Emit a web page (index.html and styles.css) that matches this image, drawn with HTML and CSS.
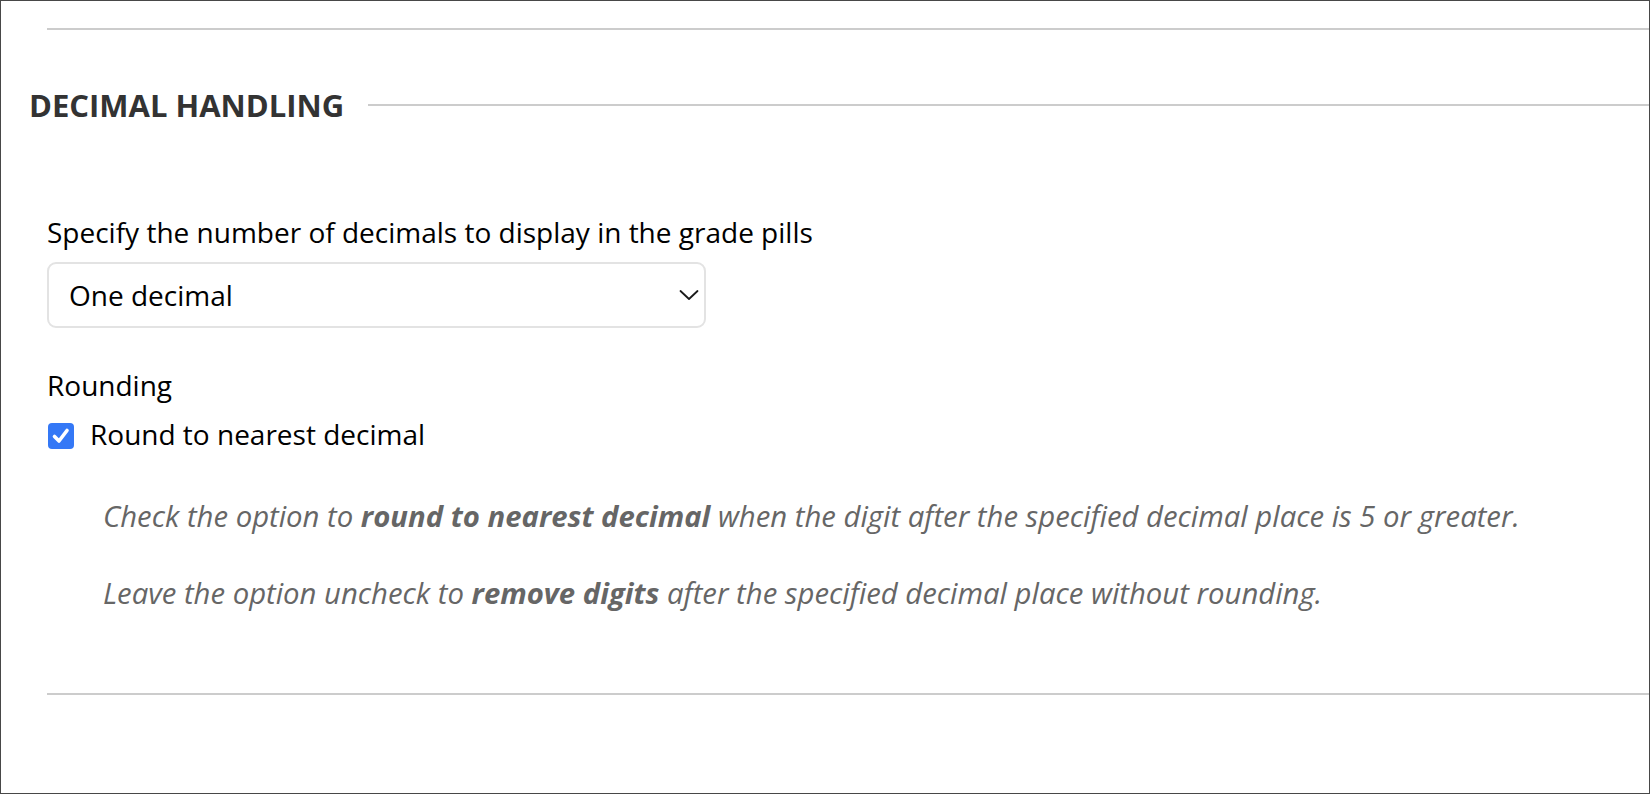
FILE: index.html
```html
<!DOCTYPE html>
<html lang="en">
<head>
<meta charset="utf-8">
<title>Decimal handling</title>
<link rel="stylesheet" href="styles.css">
</head>
<body>
<div class="frame">
  <div class="rule rule-top"></div>
  <div class="section-header">
    <h2 class="section-title">DECIMAL HANDLING</h2>
    <div class="section-line"></div>
  </div>
  <div class="fields">
    <label class="field-label" for="decimals">Specify the number of decimals to display in the grade pills</label>
    <div class="select" id="decimals">
      <span class="select-value">One decimal</span>
      <svg class="chevron" width="20" height="10" viewBox="0 0 20 10"><path d="M1.5 1 L10 9 L18.5 1" fill="none" stroke="#1a1a1a" stroke-width="1.8" stroke-linecap="round" stroke-linejoin="round"/></svg>
    </div>
    <div class="group-label">Rounding</div>
    <div class="check-row">
      <span class="checkbox">
        <svg width="26" height="26" viewBox="0 0 26 26"><path d="M6.5 13.5 L11 18 L19 7.5" fill="none" stroke="#fff" stroke-width="3.6" stroke-linecap="round" stroke-linejoin="round"/></svg>
      </span>
      <span class="check-text">Round to nearest decimal</span>
    </div>
    <div class="help">
      <p>Check the option to <b>round to nearest decimal</b> when the digit after the specified decimal place is 5 or greater.</p>
      <p>Leave the option uncheck to <b>remove digits</b> after the specified decimal place without rounding.</p>
    </div>
  </div>
  <div class="rule rule-bottom"></div>
</div>
</body>
</html>
```

FILE: styles.css
```css
html, body {
  margin: 0;
  padding: 0;
  background: #fff;
}
body {
  font-family: "Open Sans", "Liberation Sans", sans-serif;
  color: #000;
}
.frame {
  width: 1650px;
  height: 794px;
  box-sizing: border-box;
  border: 1px solid #484848;
  display: flex;
  flex-direction: column;
}
.rule {
  height: 2px;
  background: #cccccc;
  margin-left: 46px;
}
.rule-top {
  margin-top: 27px;
}
.section-header {
  display: flex;
  align-items: center;
  padding-left: 28px;
  margin-top: 53px;
}
.section-title {
  margin: 0;
  font-size: 31px;
  line-height: 44px;
  font-weight: 700;
  color: #333;
}
.section-line {
  flex: 1;
  height: 2px;
  background: #cccccc;
  margin-left: 24px;
}
.fields {
  padding-left: 46px;
  display: flex;
  flex-direction: column;
  align-items: flex-start;
}
.field-label {
  margin-top: 86px;
  font-size: 28px;
  line-height: 38px;
}
.select {
  margin-top: 11px;
  width: 659px;
  height: 66px;
  box-sizing: border-box;
  border: 2px solid #e3e3e3;
  border-radius: 9px;
  display: flex;
  align-items: center;
  justify-content: space-between;
  padding: 0 5px 0 20px;
}
.select-value {
  font-size: 28px;
}
.chevron {
  display: block;
}
.group-label {
  margin-top: 37px;
  font-size: 28px;
  line-height: 40px;
}
.check-row {
  display: flex;
  align-items: center;
  margin-top: 9px;
}
.checkbox {
  width: 26px;
  height: 26px;
  border-radius: 4px;
  background: #3478f6;
  display: flex;
  align-items: center;
  justify-content: center;
  margin-left: 1px;
  margin-top: 4px;
}
.checkbox svg {
  width: 26px;
  height: 26px;
}
.check-text {
  font-size: 28px;
  line-height: 40px;
  margin-left: 16px;
}
.help {
  padding-left: 56px;
  margin-top: 42px;
  color: #666;
  font-style: italic;
  font-size: 29.3px;
  display: flex;
  flex-direction: column;
  gap: 37px;
}
.help p {
  margin: 0;
  line-height: 40px;
}
.help b {
  font-weight: 700;
}
.rule-bottom {
  margin-top: 80px;
}
```
